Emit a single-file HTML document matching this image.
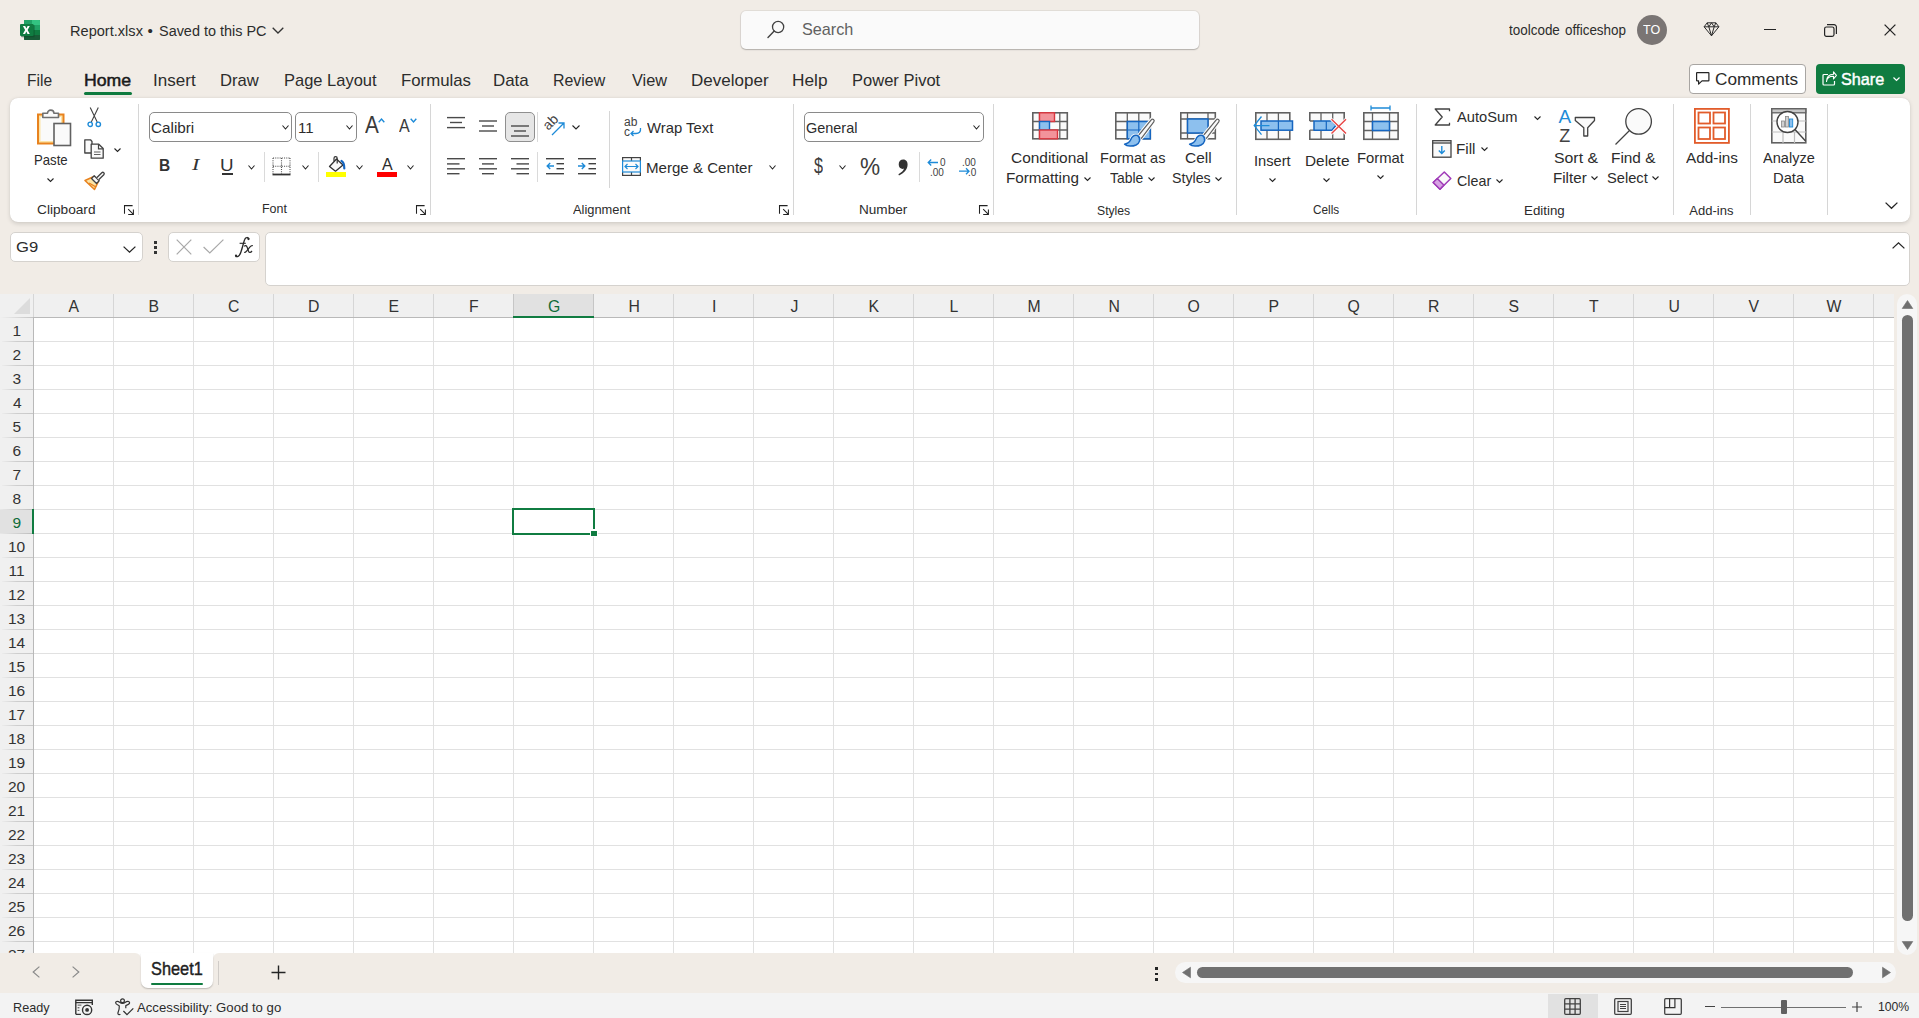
<!DOCTYPE html>
<html><head><meta charset="utf-8"><style>
html,body{margin:0;padding:0;}
body{width:1919px;height:1018px;overflow:hidden;position:relative;background:#F1ECE6;font-family:"Liberation Sans",sans-serif;}
.t{position:absolute;white-space:pre;transform-origin:0 0;}
svg{overflow:visible}
</style></head><body>
<!-- domain: Computer-Use -->
<svg style="position:absolute;left:20px;top:20px" width="20" height="20" viewBox="0 0 20 20">
<path d="M5 0H19A1 1 0 0 1 20 1V19A1 1 0 0 1 19 20H5A1 1 0 0 1 4 19V1A1 1 0 0 1 5 0Z" fill="#107C41"/>
<path d="M5 0H12V5H4V1A1 1 0 0 1 5 0Z" fill="#21A366"/>
<path d="M12 0H19A1 1 0 0 1 20 1V5H12Z" fill="#33C481"/>
<rect x="4" y="5" width="16" height="5" fill="#21A366"/>
<path d="M4 15H20V19A1 1 0 0 1 19 20H5A1 1 0 0 1 4 19Z" fill="#185C37"/>
<rect x="1" y="5" width="13.6" height="12.2" rx="1" fill="#0B4A26" opacity="0.55"/>
<rect x="0" y="4" width="13.6" height="12" rx="1" fill="#107C41"/>
<path d="M2.9 6H5.2L6.4 8.5L7.6 6H9.8L7.6 10L9.8 14H7.5L6.3 11.5L5.1 14H2.9L5.1 10Z" fill="#fff"/>
</svg><div class="t" style="left:69.55px;top:23.49px;font-size:15.3px;line-height:15.3px;font-weight:400;color:#2c2c2c;font-family:'Liberation Sans';font-style:normal;transform:scaleX(0.9533);">Report.xlsx</div><div class="t" style="left:147.60px;top:23.49px;font-size:15.3px;line-height:15.3px;font-weight:400;color:#2c2c2c;font-family:'Liberation Sans';font-style:normal;">•</div><div class="t" style="left:159.36px;top:23.49px;font-size:15.3px;line-height:15.3px;font-weight:400;color:#2c2c2c;font-family:'Liberation Sans';font-style:normal;transform:scaleX(0.9437);">Saved to this PC</div><svg style="position:absolute;left:272px;top:27px" width="12" height="7" viewBox="0 0 12 7"><path d="M0.7 0.7L6 6L11.3 0.7" fill="none" stroke="#333" stroke-width="1.3"/></svg><div style="position:absolute;left:741px;top:11px;width:458px;height:38px;background:#FAFAFA;border-radius:5px;box-shadow:0 0 0 1px rgba(0,0,0,0.06),0 1px 1.5px rgba(0,0,0,0.22);"></div><svg style="position:absolute;left:767px;top:21px" width="18" height="18" viewBox="0 0 18 18"><circle cx="11.1" cy="6" r="5.6" fill="none" stroke="#424242" stroke-width="1.3"/><path d="M7.2 10.1L1 16.6" stroke="#424242" stroke-width="1.4" stroke-linecap="round"/></svg><div class="t" style="left:801.75px;top:20.55px;font-size:17px;line-height:17px;font-weight:400;color:#616161;font-family:'Liberation Sans';font-style:normal;transform:scaleX(0.9538);">Search</div><div class="t" style="left:1509.10px;top:23.00px;font-size:14px;line-height:14px;font-weight:400;color:#2c2c2c;font-family:'Liberation Sans';font-style:normal;transform:scaleX(0.9604);">toolcode</div><div class="t" style="left:1564.74px;top:23.00px;font-size:14px;line-height:14px;font-weight:400;color:#2c2c2c;font-family:'Liberation Sans';font-style:normal;transform:scaleX(0.9597);">officeshop</div><div style="position:absolute;left:1637px;top:15px;width:30px;height:30px;background:#7A7574;border-radius:50%;"></div><div class="t" style="left:1643.00px;top:23.93px;font-size:12.9px;line-height:12.9px;font-weight:400;color:#ffffff;font-family:'Liberation Sans';font-style:normal;transform:scaleX(0.9706);">TO</div><svg style="position:absolute;left:1703px;top:22px" width="17" height="15" viewBox="0 0 17 15"><path d="M4.2 0.8H12.8L15.9 4.8L8.5 13.8L1.1 4.8Z M1.1 4.8H15.9 M5.8 4.8L8.5 13.8L11.2 4.8 M4.2 0.8L5.8 4.8L8.5 0.8L11.2 4.8L12.8 0.8" fill="none" stroke="#2a2a2a" stroke-width="1" stroke-linejoin="round"/></svg><div style="position:absolute;left:1764px;top:29px;width:12px;height:1.2px;background:#242424;"></div><svg style="position:absolute;left:1823.5px;top:23.5px" width="13" height="13" viewBox="0 0 13 13"><rect x="0.6" y="3" width="9.4" height="9.4" rx="1.8" fill="none" stroke="#242424" stroke-width="1.2"/><path d="M3 0.6H10A2.4 2.4 0 0 1 12.4 3V10" fill="none" stroke="#242424" stroke-width="1.2"/></svg><svg style="position:absolute;left:1884px;top:24px" width="12" height="12" viewBox="0 0 12 12"><path d="M0.6 0.6L11.4 11.4M11.4 0.6L0.6 11.4" stroke="#242424" stroke-width="1.3"/></svg><div class="t" style="left:26.58px;top:71.55px;font-size:17px;line-height:17px;font-weight:400;color:#2c2c2c;font-family:'Liberation Sans';font-style:normal;transform:scaleX(0.9154);">File</div><div class="t" style="left:153.20px;top:71.55px;font-size:17px;line-height:17px;font-weight:400;color:#2c2c2c;font-family:'Liberation Sans';font-style:normal;transform:scaleX(1.0024);">Insert</div><div class="t" style="left:219.72px;top:71.55px;font-size:17px;line-height:17px;font-weight:400;color:#2c2c2c;font-family:'Liberation Sans';font-style:normal;transform:scaleX(0.9769);">Draw</div><div class="t" style="left:283.53px;top:71.55px;font-size:17px;line-height:17px;font-weight:400;color:#2c2c2c;font-family:'Liberation Sans';font-style:normal;transform:scaleX(0.9695);">Page Layout</div><div class="t" style="left:400.61px;top:71.55px;font-size:17px;line-height:17px;font-weight:400;color:#2c2c2c;font-family:'Liberation Sans';font-style:normal;transform:scaleX(0.9884);">Formulas</div><div class="t" style="left:493.41px;top:71.55px;font-size:17px;line-height:17px;font-weight:400;color:#2c2c2c;font-family:'Liberation Sans';font-style:normal;transform:scaleX(0.9943);">Data</div><div class="t" style="left:553.26px;top:71.55px;font-size:17px;line-height:17px;font-weight:400;color:#2c2c2c;font-family:'Liberation Sans';font-style:normal;transform:scaleX(0.9364);">Review</div><div class="t" style="left:631.50px;top:71.55px;font-size:17px;line-height:17px;font-weight:400;color:#2c2c2c;font-family:'Liberation Sans';font-style:normal;transform:scaleX(0.9595);">View</div><div class="t" style="left:690.50px;top:71.55px;font-size:17px;line-height:17px;font-weight:400;color:#2c2c2c;font-family:'Liberation Sans';font-style:normal;transform:scaleX(1.0013);">Developer</div><div class="t" style="left:791.78px;top:71.55px;font-size:17px;line-height:17px;font-weight:400;color:#2c2c2c;font-family:'Liberation Sans';font-style:normal;transform:scaleX(1.0152);">Help</div><div class="t" style="left:851.53px;top:71.55px;font-size:17px;line-height:17px;font-weight:400;color:#2c2c2c;font-family:'Liberation Sans';font-style:normal;transform:scaleX(0.9722);">Power Pivot</div><div class="t" style="left:83.56px;top:71.55px;font-size:17px;line-height:17px;font-weight:400;color:#1a1a1a;font-family:'Liberation Sans';font-style:normal;transform:scaleX(1.0409);-webkit-text-stroke:0.5px #1a1a1a;">Home</div><div style="position:absolute;left:84px;top:92px;width:48px;height:3px;background:#0F7B3F;border-radius:1.5px;"></div><div style="position:absolute;left:1689px;top:64px;width:117px;height:30px;background:#fff;border:1px solid #A8A5A2;border-radius:4px;box-sizing:border-box;"></div><svg style="position:absolute;left:1696px;top:72px" width="14" height="13" viewBox="0 0 14 13"><path d="M1.1 0.6H12.4A0.5 0.5 0 0 1 12.9 1.1V8.4A0.5 0.5 0 0 1 12.4 8.9H6L2.6 12.1V8.9H1.1A0.5 0.5 0 0 1 0.6 8.4V1.1A0.5 0.5 0 0 1 1.1 0.6Z" fill="none" stroke="#242424" stroke-width="1.2" stroke-linejoin="round"/></svg><div class="t" style="left:1714.99px;top:70.55px;font-size:17px;line-height:17px;font-weight:400;color:#2c2c2c;font-family:'Liberation Sans';font-style:normal;transform:scaleX(1.0123);">Comments</div><div style="position:absolute;left:1816px;top:64px;width:89px;height:30px;background:#107C41;border-radius:4px;"></div><svg style="position:absolute;left:1822px;top:71px" width="15" height="15" viewBox="0 0 15 15"><path d="M6 3.5H2A1 1 0 0 0 1 4.5V13A1 1 0 0 0 2 14H11.5A1 1 0 0 0 12.5 13V10" fill="none" stroke="#fff" stroke-width="1.2"/><path d="M4.5 10.5C4.8 7 7.5 5.2 11.5 5.2V8L14.4 4.3L11.5 0.8V3.3C6.8 3.5 4.6 6.5 4.5 10.5Z" fill="none" stroke="#fff" stroke-width="1.1" stroke-linejoin="round"/></svg><div class="t" style="left:1841.05px;top:70.55px;font-size:17px;line-height:17px;font-weight:400;color:#ffffff;font-family:'Liberation Sans';font-style:normal;transform:scaleX(0.9545);-webkit-text-stroke:0.45px #fff;">Share</div><svg style="position:absolute;left:1893px;top:77px" width="7" height="4" viewBox="0 0 7 4"><path d="M0.5 0.5L3.5 3.5L6.5 0.5" fill="none" stroke="#fff" stroke-width="1.2"/></svg><div style="position:absolute;left:10px;top:98px;width:1900px;height:124px;background:#fff;border-radius:8px;box-shadow:0 1.5px 4px rgba(0,0,0,0.13),0 0 1px rgba(0,0,0,0.12);"></div><div style="position:absolute;left:138px;top:104px;width:1px;height:111px;background:#D6D6D6;"></div><div style="position:absolute;left:430px;top:104px;width:1px;height:111px;background:#D6D6D6;"></div><div style="position:absolute;left:793px;top:104px;width:1px;height:111px;background:#D6D6D6;"></div><div style="position:absolute;left:993px;top:104px;width:1px;height:111px;background:#D6D6D6;"></div><div style="position:absolute;left:1236px;top:104px;width:1px;height:111px;background:#D6D6D6;"></div><div style="position:absolute;left:1416px;top:104px;width:1px;height:111px;background:#D6D6D6;"></div><div style="position:absolute;left:1673px;top:104px;width:1px;height:111px;background:#D6D6D6;"></div><div style="position:absolute;left:1750px;top:104px;width:1px;height:111px;background:#D6D6D6;"></div><div style="position:absolute;left:1827px;top:104px;width:1px;height:111px;background:#D6D6D6;"></div><svg style="position:absolute;left:36px;top:107px" width="36" height="40" viewBox="0 0 36 40">
<rect x="2" y="7.5" width="25.5" height="29" fill="#FCE4A6" stroke="#E8821E" stroke-width="2"/>
<rect x="4.5" y="10" width="20.5" height="24" fill="#FAFAFA"/>
<path d="M6.8 10.5V6.3H11.5A3.2 3.2 0 0 1 17.9 6.3H22.5V10.5Z" fill="#FAFAFA" stroke="#707070" stroke-width="1.6" stroke-linejoin="round"/>
<rect x="18" y="16.5" width="16.5" height="22" fill="#FAFAFA" stroke="#616161" stroke-width="1.6"/>
</svg><div class="t" style="left:33.79px;top:153.28px;font-size:14.5px;line-height:14.5px;font-weight:400;color:#2c2c2c;font-family:'Liberation Sans';font-style:normal;transform:scaleX(0.9083);">Paste</div><svg style="position:absolute;left:47px;top:178px" width="7" height="4" viewBox="0 0 7 4"><path d="M0.5 0.5L3.5 3.5L6.5 0.5" fill="none" stroke="#242424" stroke-width="1.1"/></svg><svg style="position:absolute;left:87px;top:107px" width="15" height="21" viewBox="0 0 15 21"><path d="M3.2 0.5L10.2 15 M11.3 0.5L4.3 15" stroke="#424242" stroke-width="1.1"/><circle cx="3.2" cy="17.3" r="2.2" fill="#fff" stroke="#1E8BD8" stroke-width="1.4"/><circle cx="11.3" cy="17.3" r="2.2" fill="#fff" stroke="#1E8BD8" stroke-width="1.4"/></svg><svg style="position:absolute;left:84px;top:139px" width="20" height="20" viewBox="0 0 20 20">
<path d="M7 14H0.8V0.8H6.5L8 2.5V6" fill="#FAFAFA" stroke="#424242" stroke-width="1.3" stroke-linejoin="round"/>
<path d="M7.2 5.2H14.8L19.2 9.5V19.2H7.2Z" fill="#FAFAFA" stroke="#424242" stroke-width="1.3" stroke-linejoin="round"/>
<path d="M14.5 5.2V9.8H19" fill="none" stroke="#424242" stroke-width="1.2"/>
<path d="M10 13H16.5 M10 15.5H16.5" stroke="#616161" stroke-width="1.1"/>
</svg><svg style="position:absolute;left:114px;top:148px" width="7" height="4" viewBox="0 0 7 4"><path d="M0.5 0.5L3.5 3.5L6.5 0.5" fill="none" stroke="#242424" stroke-width="1.1"/></svg><svg style="position:absolute;left:84px;top:171px" width="21" height="19" viewBox="0 0 21 19">
<path d="M1 9.5L8.8 6L14 11.2L10.5 18.5Z" fill="#FCE4A6" stroke="#E8821E" stroke-width="1.6" stroke-linejoin="round"/>
<path d="M5 12L12 16" stroke="#E8821E" stroke-width="1.4"/>
<path d="M7.5 7.5L12.5 12.5L15.2 9.8L10.2 4.8Z" fill="#FAFAFA" stroke="#424242" stroke-width="1.3" stroke-linejoin="round"/>
<path d="M12.7 6.8L17.8 1.7A1.4 1.4 0 0 1 19.8 3.7L14.7 8.8" fill="#FAFAFA" stroke="#424242" stroke-width="1.3"/>
</svg><div class="t" style="left:36.65px;top:202.65px;font-size:13px;line-height:13px;font-weight:400;color:#2c2c2c;font-family:'Liberation Sans';font-style:normal;transform:scaleX(1.0519);">Clipboard</div><svg style="position:absolute;left:124px;top:205px" width="11" height="11" viewBox="0 0 11 11"><path d="M0.5 8.8V0.6H8.6 M4.2 4.2L9.4 9.4 M9.4 4.4V9.5H4.2" fill="none" stroke="#222" stroke-width="1.05"/></svg><div style="position:absolute;left:149px;top:112px;width:143px;height:30px;border:1px solid #8A8A8A;border-radius:5px;box-sizing:border-box;background:#fff;"></div><div class="t" style="left:151.28px;top:120.25px;font-size:15px;line-height:15px;font-weight:400;color:#2c2c2c;font-family:'Liberation Sans';font-style:normal;transform:scaleX(1.0171);">Calibri</div><svg style="position:absolute;left:282px;top:125px" width="7" height="4.5" viewBox="0 0 7 4.5"><path d="M0.5 0.5L3.5 4.0L6.5 0.5" fill="none" stroke="#242424" stroke-width="1.1"/></svg><div style="position:absolute;left:295px;top:112px;width:62px;height:30px;border:1px solid #8A8A8A;border-radius:5px;box-sizing:border-box;background:#fff;"></div><div class="t" style="left:298.00px;top:120.25px;font-size:15px;line-height:15px;font-weight:400;color:#2c2c2c;font-family:'Liberation Sans';font-style:normal;">11</div><svg style="position:absolute;left:346px;top:125px" width="7" height="4.5" viewBox="0 0 7 4.5"><path d="M0.5 0.5L3.5 4.0L6.5 0.5" fill="none" stroke="#242424" stroke-width="1.1"/></svg><div class="t" style="left:365.40px;top:113.65px;font-size:23px;line-height:23px;font-weight:400;color:#3a3a3a;font-family:'Liberation Sans';font-style:normal;transform:scaleX(0.9000);">A</div><svg style="position:absolute;left:378px;top:118px" width="7" height="5" viewBox="0 0 7 5"><path d="M0.7 4.2L3.5 1L6.3 4.2" fill="none" stroke="#1E8BD8" stroke-width="1.4"/></svg><div class="t" style="left:399.00px;top:118.32px;font-size:17.5px;line-height:17.5px;font-weight:400;color:#3a3a3a;font-family:'Liberation Sans';font-style:normal;transform:scaleX(0.9167);">A</div><svg style="position:absolute;left:410px;top:118px" width="7" height="5" viewBox="0 0 7 5"><path d="M0.7 0.8L3.5 4L6.3 0.8" fill="none" stroke="#1E8BD8" stroke-width="1.4"/></svg><div class="t" style="left:158.66px;top:157.38px;font-size:16.5px;line-height:16.5px;font-weight:700;color:#333;font-family:'Liberation Sans';font-style:normal;transform:scaleX(0.9400);">B</div><div class="t" style="left:192.00px;top:157.38px;font-size:16.5px;line-height:16.5px;font-weight:400;color:#333;font-family:'Liberation Serif';font-style:italic;transform:scaleX(1.3333);">I</div><div class="t" style="left:220.46px;top:157.38px;font-size:16.5px;line-height:16.5px;font-weight:400;color:#333;font-family:'Liberation Sans';font-style:normal;transform:scaleX(1.1400);">U</div><div style="position:absolute;left:222px;top:173px;width:11px;height:1.6px;background:#333;"></div><svg style="position:absolute;left:248px;top:165px" width="7" height="4.5" viewBox="0 0 7 4.5"><path d="M0.5 0.5L3.5 4.0L6.5 0.5" fill="none" stroke="#242424" stroke-width="1.1"/></svg><div style="position:absolute;left:264px;top:152px;width:1px;height:30px;background:#DADADA;"></div><svg style="position:absolute;left:272px;top:157px" width="19" height="19" viewBox="0 0 19 19"><path d="M1 1H18 M1 9.2H18 M1 1V17 M9.5 1V17 M18 1V17" fill="none" stroke="#555" stroke-width="1.1" stroke-dasharray="1.1 1.1"/><path d="M0.5 17.5H18.5" stroke="#333" stroke-width="1.8"/></svg><svg style="position:absolute;left:302px;top:165px" width="7" height="4.5" viewBox="0 0 7 4.5"><path d="M0.5 0.5L3.5 4.0L6.5 0.5" fill="none" stroke="#242424" stroke-width="1.1"/></svg><div style="position:absolute;left:318px;top:152px;width:1px;height:30px;background:#DADADA;"></div><svg style="position:absolute;left:326px;top:156px" width="21" height="22" viewBox="0 0 21 22">
<path d="M3.5 10.5L10.5 3L17 9L9.5 15.2Z" fill="#FAFAFA" stroke="#333" stroke-width="1.3" stroke-linejoin="round"/>
<path d="M8 5.5V2.2A1.6 1.6 0 0 1 11.2 2.2V7.5" fill="none" stroke="#333" stroke-width="1.2"/>
<path d="M15.5 5C17.5 6 18.3 8.5 18.3 12.5" fill="none" stroke="#1565C0" stroke-width="2.2" stroke-linecap="round"/>
<rect x="0" y="16" width="20" height="5" fill="#FFFF00"/>
</svg><svg style="position:absolute;left:356px;top:165px" width="7" height="4.5" viewBox="0 0 7 4.5"><path d="M0.5 0.5L3.5 4.0L6.5 0.5" fill="none" stroke="#242424" stroke-width="1.1"/></svg><div class="t" style="left:382.00px;top:157.00px;font-size:16px;line-height:16px;font-weight:400;color:#2c2c2c;font-family:'Liberation Sans';font-style:normal;transform:scaleX(1.0000);">A</div><div style="position:absolute;left:377px;top:172px;width:20px;height:5px;background:#FF0000;"></div><svg style="position:absolute;left:407px;top:165px" width="7" height="4.5" viewBox="0 0 7 4.5"><path d="M0.5 0.5L3.5 4.0L6.5 0.5" fill="none" stroke="#242424" stroke-width="1.1"/></svg><div class="t" style="left:261.74px;top:202.45px;font-size:13px;line-height:13px;font-weight:400;color:#2c2c2c;font-family:'Liberation Sans';font-style:normal;transform:scaleX(0.9600);">Font</div><svg style="position:absolute;left:416px;top:205px" width="11" height="11" viewBox="0 0 11 11"><path d="M0.5 8.8V0.6H8.6 M4.2 4.2L9.4 9.4 M9.4 4.4V9.5H4.2" fill="none" stroke="#222" stroke-width="1.05"/></svg><svg style="position:absolute;left:447px;top:100px" width="30" height="90" viewBox="0 0 30 90"><rect x="0" y="16.900000000000002" width="18" height="1.4" fill="#4a4a4a"/><rect x="3" y="21.8" width="12" height="1.4" fill="#4a4a4a"/><rect x="0" y="26.900000000000002" width="18" height="1.4" fill="#4a4a4a"/></svg><svg style="position:absolute;left:479px;top:100px" width="30" height="90" viewBox="0 0 30 90"><rect x="0" y="20.3" width="18" height="1.4" fill="#4a4a4a"/><rect x="3" y="25.3" width="12" height="1.4" fill="#4a4a4a"/><rect x="0" y="30.3" width="18" height="1.4" fill="#4a4a4a"/></svg><div style="position:absolute;left:505px;top:112px;width:30px;height:30px;background:#E6E6E6;border:1px solid #8F8F8F;border-radius:5px;box-sizing:border-box;"></div><svg style="position:absolute;left:511px;top:100px" width="30" height="90" viewBox="0 0 30 90"><rect x="0" y="25.3" width="18" height="1.4" fill="#4a4a4a"/><rect x="3" y="30.3" width="12" height="1.4" fill="#4a4a4a"/><rect x="0" y="35.3" width="18" height="1.4" fill="#4a4a4a"/></svg><div style="position:absolute;left:537px;top:112px;width:1px;height:30px;background:#DADADA;"></div><svg style="position:absolute;left:544px;top:116px" width="22" height="20" viewBox="0 0 22 20">
<text x="0" y="0" transform="translate(4.2 15) rotate(-45)" font-family="Liberation Sans" font-size="14" fill="#424242">ab</text>
<path d="M8 19L20 7 M14.5 7H20V12.5" fill="none" stroke="#1E8BD8" stroke-width="1.3"/>
</svg><svg style="position:absolute;left:572px;top:125px" width="8" height="4.5" viewBox="0 0 8 4.5"><path d="M0.5 0.5L4.0 4.0L7.5 0.5" fill="none" stroke="#242424" stroke-width="1.1"/></svg><svg style="position:absolute;left:447px;top:100px" width="30" height="90" viewBox="0 0 30 90"><rect x="0" y="58.0" width="18" height="1.4" fill="#4a4a4a"/><rect x="0" y="63.199999999999996" width="12.5" height="1.4" fill="#4a4a4a"/><rect x="0" y="68.1" width="18" height="1.4" fill="#4a4a4a"/><rect x="0" y="73.0" width="12.5" height="1.4" fill="#4a4a4a"/></svg><svg style="position:absolute;left:479px;top:100px" width="30" height="90" viewBox="0 0 30 90"><rect x="0" y="58.0" width="18" height="1.4" fill="#4a4a4a"/><rect x="3" y="63.199999999999996" width="12" height="1.4" fill="#4a4a4a"/><rect x="0" y="68.1" width="18" height="1.4" fill="#4a4a4a"/><rect x="3" y="73.0" width="12" height="1.4" fill="#4a4a4a"/></svg><svg style="position:absolute;left:511px;top:100px" width="30" height="90" viewBox="0 0 30 90"><rect x="0" y="58.0" width="18" height="1.4" fill="#4a4a4a"/><rect x="5.5" y="63.199999999999996" width="12.5" height="1.4" fill="#4a4a4a"/><rect x="0" y="68.1" width="18" height="1.4" fill="#4a4a4a"/><rect x="5.5" y="73.0" width="12.5" height="1.4" fill="#4a4a4a"/></svg><div style="position:absolute;left:537px;top:152px;width:1px;height:30px;background:#DADADA;"></div><svg style="position:absolute;left:546px;top:157px" width="18" height="18" viewBox="0 0 18 18"><rect x="0" y="1" width="18" height="1.4" fill="#424242"/><rect x="10.5" y="6" width="7.5" height="1.4" fill="#424242"/><rect x="10.5" y="11" width="7.5" height="1.4" fill="#424242"/><rect x="0" y="16" width="18" height="1.4" fill="#424242"/><path d="M8 9H1.2 M4.2 6L1.2 9L4.2 12" fill="none" stroke="#1E8BD8" stroke-width="1.4"/></svg><svg style="position:absolute;left:578px;top:157px" width="18" height="18" viewBox="0 0 18 18"><rect x="0" y="1" width="18" height="1.4" fill="#424242"/><rect x="10.5" y="6" width="7.5" height="1.4" fill="#424242"/><rect x="10.5" y="11" width="7.5" height="1.4" fill="#424242"/><rect x="0" y="16" width="18" height="1.4" fill="#424242"/><path d="M0 9H6.8 M3.8 6L6.8 9L3.8 12" fill="none" stroke="#1E8BD8" stroke-width="1.4"/></svg><div style="position:absolute;left:609px;top:111px;width:1px;height:77px;background:#D6D6D6;"></div><svg style="position:absolute;left:624px;top:117px" width="18" height="20" viewBox="0 0 18 20">
<text x="0" y="9" font-family="Liberation Sans" font-size="12" fill="#424242">ab</text>
<text x="0" y="19" font-family="Liberation Sans" font-size="12" fill="#424242">c</text>
<path d="M16.5 11C17 15 15 16.5 12 16.5H7 M9.5 14L7 16.5L9.5 19" fill="none" stroke="#1E8BD8" stroke-width="1.3"/>
</svg><div class="t" style="left:647.40px;top:120.25px;font-size:15px;line-height:15px;font-weight:400;color:#2c2c2c;font-family:'Liberation Sans';font-style:normal;transform:scaleX(0.9896);">Wrap Text</div><svg style="position:absolute;left:622px;top:157px" width="19" height="19" viewBox="0 0 19 19">
<rect x="0.6" y="0.6" width="17.8" height="17.8" fill="#FAFAFA" stroke="#424242" stroke-width="1.2"/>
<path d="M9.5 0.6V4 M9.5 15V18.4" stroke="#424242" stroke-width="1.2"/>
<rect x="0.6" y="4" width="17.8" height="11" fill="#FAFAFA" stroke="#1E8BD8" stroke-width="1.2"/>
<path d="M3 9.5H16 M5.5 7L3 9.5L5.5 12 M13.5 7L16 9.5L13.5 12" fill="none" stroke="#1E8BD8" stroke-width="1.2"/>
</svg><div class="t" style="left:646.39px;top:159.95px;font-size:15px;line-height:15px;font-weight:400;color:#2c2c2c;font-family:'Liberation Sans';font-style:normal;transform:scaleX(1.0057);">Merge & Center</div><svg style="position:absolute;left:769px;top:165px" width="7" height="4.5" viewBox="0 0 7 4.5"><path d="M0.5 0.5L3.5 4.0L6.5 0.5" fill="none" stroke="#242424" stroke-width="1.1"/></svg><div class="t" style="left:573.40px;top:202.95px;font-size:13px;line-height:13px;font-weight:400;color:#2c2c2c;font-family:'Liberation Sans';font-style:normal;transform:scaleX(0.9897);">Alignment</div><svg style="position:absolute;left:779px;top:205px" width="11" height="11" viewBox="0 0 11 11"><path d="M0.5 8.8V0.6H8.6 M4.2 4.2L9.4 9.4 M9.4 4.4V9.5H4.2" fill="none" stroke="#222" stroke-width="1.05"/></svg><div style="position:absolute;left:804px;top:112px;width:180px;height:30px;border:1px solid #8A8A8A;border-radius:5px;box-sizing:border-box;background:#fff;"></div><div class="t" style="left:806.34px;top:120.25px;font-size:15px;line-height:15px;font-weight:400;color:#2c2c2c;font-family:'Liberation Sans';font-style:normal;transform:scaleX(0.9635);">General</div><svg style="position:absolute;left:973px;top:125px" width="7" height="4.5" viewBox="0 0 7 4.5"><path d="M0.5 0.5L3.5 4.0L6.5 0.5" fill="none" stroke="#242424" stroke-width="1.1"/></svg><div class="t" style="left:814.00px;top:156.22px;font-size:21.5px;line-height:21.5px;font-weight:400;color:#3c3c3c;font-family:'Liberation Sans';font-style:normal;transform:scaleX(0.7500);">$</div><svg style="position:absolute;left:839px;top:165px" width="7" height="4.5" viewBox="0 0 7 4.5"><path d="M0.5 0.5L3.5 4.0L6.5 0.5" fill="none" stroke="#242424" stroke-width="1.1"/></svg><div class="t" style="left:859.74px;top:155.53px;font-size:23.5px;line-height:23.5px;font-weight:400;color:#3c3c3c;font-family:'Liberation Sans';font-style:normal;transform:scaleX(0.9632);">%</div><svg style="position:absolute;left:898px;top:159px" width="10" height="17" viewBox="0 0 10 17"><path d="M5.2 0.6C8.3 0.6 9.6 3 9.6 5.6C9.6 10.5 6 14.5 1 16.4L0.4 15.3C3.6 13.6 5.6 11.4 6 9.6C5.7 9.8 5.2 9.9 4.8 9.9C2.3 9.9 0.7 8.1 0.7 5.2C0.7 2.4 2.6 0.6 5.2 0.6Z" fill="#333"/></svg><div style="position:absolute;left:919px;top:152px;width:1px;height:30px;background:#DADADA;"></div><svg style="position:absolute;left:927px;top:157px" width="20" height="19" viewBox="0 0 20 19">
<text x="13" y="8.5" font-family="Liberation Sans" font-size="10" fill="#424242">0</text>
<text x="3" y="18.5" font-family="Liberation Sans" font-size="10" fill="#424242">.00</text>
<path d="M11 5.5H1.2 M4.2 2.5L1.2 5.5L4.2 8.5" fill="none" stroke="#1E8BD8" stroke-width="1.3"/>
</svg><svg style="position:absolute;left:959px;top:157px" width="20" height="19" viewBox="0 0 20 19">
<text x="3" y="8.5" font-family="Liberation Sans" font-size="10" fill="#424242">.00</text>
<text x="9" y="18.5" font-family="Liberation Sans" font-size="10" fill="#424242">.0</text>
<path d="M0 14.2H10 M7 11.2L10 14.2L7 17.2" fill="none" stroke="#1E8BD8" stroke-width="1.3"/>
</svg><div class="t" style="left:858.66px;top:202.95px;font-size:13px;line-height:13px;font-weight:400;color:#2c2c2c;font-family:'Liberation Sans';font-style:normal;transform:scaleX(1.0444);">Number</div><svg style="position:absolute;left:979px;top:205px" width="11" height="11" viewBox="0 0 11 11"><path d="M0.5 8.8V0.6H8.6 M4.2 4.2L9.4 9.4 M9.4 4.4V9.5H4.2" fill="none" stroke="#222" stroke-width="1.05"/></svg><svg style="position:absolute;left:1032px;top:112px" width="37" height="28" viewBox="0 0 37 28">
<rect x="0.8" y="0.8" width="34.5" height="26" fill="#FAFAFA" stroke="#616161" stroke-width="1.6"/>
<path d="M7.5 0.8V26.8 M27.8 0.8V26.8 M0.8 9.5H35.3 M0.8 18H35.3" stroke="#616161" stroke-width="1.3"/>
<rect x="7.5" y="0.8" width="15" height="8.7" fill="#F2939A" stroke="#D9363E" stroke-width="1.4"/>
<rect x="7.5" y="9.5" width="10" height="8.5" fill="#8DC0EE" stroke="#1565C0" stroke-width="1.4"/>
<rect x="7.5" y="18" width="18" height="8.8" fill="#F2939A" stroke="#D9363E" stroke-width="1.4"/>
</svg><div class="t" style="left:1010.54px;top:151.28px;font-size:14.5px;line-height:14.5px;font-weight:400;color:#2c2c2c;font-family:'Liberation Sans';font-style:normal;transform:scaleX(1.0648);">Conditional</div><div class="t" style="left:1005.65px;top:171.28px;font-size:14.5px;line-height:14.5px;font-weight:400;color:#2c2c2c;font-family:'Liberation Sans';font-style:normal;transform:scaleX(1.0515);">Formatting</div><svg style="position:absolute;left:1084px;top:177px" width="7" height="4" viewBox="0 0 7 4"><path d="M0.5 0.5L3.5 3.5L6.5 0.5" fill="none" stroke="#242424" stroke-width="1.1"/></svg><svg style="position:absolute;left:1115px;top:112px" width="39" height="35" viewBox="0 0 39 35">
<rect x="0.8" y="0.8" width="34.5" height="26" fill="#FAFAFA" stroke="#616161" stroke-width="1.6"/>
<path d="M12.3 0.8V26.8 M23.8 0.8V26.8 M0.8 9.5H35.3 M0.8 18H35.3" stroke="#616161" stroke-width="1.3"/>
<rect x="12.3" y="9.5" width="23" height="17.3" fill="#8DC0EE" stroke="#1565C0" stroke-width="1.5"/>
<path d="M23.8 9.5V26.8 M12.3 18H35.3" stroke="#1565C0" stroke-width="1.2"/>
<path d="M36.2 7.8A1.6 1.6 0 0 1 38.8 9.8L26.4 26.4L23 24Z" fill="#fff" stroke="#fff" stroke-width="3.2" stroke-linejoin="round"/><path d="M36.2 7.8A1.6 1.6 0 0 1 38.8 9.8L26.4 26.4L23 24Z" fill="#FAFAFA" stroke="#616161" stroke-width="1.2" stroke-linejoin="round"/>
<path d="M22.8 23.6C19 22.6 16.8 25 15.8 27.6C15 29.6 12.8 31.6 9.6 32.2C12.2 34.6 17.5 34.6 21 33C24.6 31.2 26.4 26.8 22.8 23.6Z" fill="#fff" stroke="#fff" stroke-width="3" stroke-linejoin="round"/><path d="M22.8 23.6C19 22.6 16.8 25 15.8 27.6C15 29.6 12.8 31.6 9.6 32.2C12.2 34.6 17.5 34.6 21 33C24.6 31.2 26.4 26.8 22.8 23.6Z" fill="#8DC0EE" stroke="#1565C0" stroke-width="1.5" stroke-linejoin="round"/>
</svg><div class="t" style="left:1099.60px;top:151.28px;font-size:14.5px;line-height:14.5px;font-weight:400;color:#2c2c2c;font-family:'Liberation Sans';font-style:normal;transform:scaleX(1.0031);">Format as</div><div class="t" style="left:1109.90px;top:171.28px;font-size:14.5px;line-height:14.5px;font-weight:400;color:#2c2c2c;font-family:'Liberation Sans';font-style:normal;transform:scaleX(0.9588);">Table</div><svg style="position:absolute;left:1148px;top:177px" width="7" height="4" viewBox="0 0 7 4"><path d="M0.5 0.5L3.5 3.5L6.5 0.5" fill="none" stroke="#242424" stroke-width="1.1"/></svg><svg style="position:absolute;left:1180px;top:112px" width="39" height="35" viewBox="0 0 39 35">
<rect x="0.8" y="0.8" width="34.5" height="26" fill="#FAFAFA" stroke="#616161" stroke-width="1.6"/>
<path d="M7.5 0.8V26.8 M28 0.8V26.8 M0.8 7H35.3 M0.8 21H35.3" stroke="#616161" stroke-width="1.3"/>
<rect x="7.5" y="7" width="20.5" height="14" fill="#8DC0EE" stroke="#1565C0" stroke-width="1.5"/>
<path d="M36.2 7.8A1.6 1.6 0 0 1 38.8 9.8L26.4 26.4L23 24Z" fill="#fff" stroke="#fff" stroke-width="3.2" stroke-linejoin="round"/><path d="M36.2 7.8A1.6 1.6 0 0 1 38.8 9.8L26.4 26.4L23 24Z" fill="#FAFAFA" stroke="#616161" stroke-width="1.2" stroke-linejoin="round"/>
<path d="M22.8 23.6C19 22.6 16.8 25 15.8 27.6C15 29.6 12.8 31.6 9.6 32.2C12.2 34.6 17.5 34.6 21 33C24.6 31.2 26.4 26.8 22.8 23.6Z" fill="#fff" stroke="#fff" stroke-width="3" stroke-linejoin="round"/><path d="M22.8 23.6C19 22.6 16.8 25 15.8 27.6C15 29.6 12.8 31.6 9.6 32.2C12.2 34.6 17.5 34.6 21 33C24.6 31.2 26.4 26.8 22.8 23.6Z" fill="#8DC0EE" stroke="#1565C0" stroke-width="1.5" stroke-linejoin="round"/>
</svg><div class="t" style="left:1184.93px;top:151.28px;font-size:14.5px;line-height:14.5px;font-weight:400;color:#2c2c2c;font-family:'Liberation Sans';font-style:normal;transform:scaleX(1.0652);">Cell</div><div class="t" style="left:1171.52px;top:171.28px;font-size:14.5px;line-height:14.5px;font-weight:400;color:#2c2c2c;font-family:'Liberation Sans';font-style:normal;transform:scaleX(0.9789);">Styles</div><svg style="position:absolute;left:1215px;top:177px" width="7" height="4" viewBox="0 0 7 4"><path d="M0.5 0.5L3.5 3.5L6.5 0.5" fill="none" stroke="#242424" stroke-width="1.1"/></svg><div class="t" style="left:1097.46px;top:203.55px;font-size:13px;line-height:13px;font-weight:400;color:#2c2c2c;font-family:'Liberation Sans';font-style:normal;transform:scaleX(0.9382);">Styles</div><svg style="position:absolute;left:1253px;top:112px" width="41" height="28" viewBox="0 0 41 28">
<rect x="2.8" y="0.8" width="34" height="26.5" fill="#FAFAFA" stroke="#616161" stroke-width="1.6"/>
<path d="M14 0.8V27.3 M25.4 0.8V27.3" stroke="#616161" stroke-width="1.3"/>
<rect x="8" y="9" width="31.5" height="9.2" fill="#8DC0EE" stroke="#1565C0" stroke-width="1.5"/>
<path d="M25.4 9V18.2" stroke="#1565C0" stroke-width="1.2"/>
<path d="M16.5 13.6H2 M8.5 4.5L1.2 13.6L8.5 22.7" fill="none" stroke="#1E8BD8" stroke-width="1.3"/>
</svg><div class="t" style="left:1254.39px;top:153.68px;font-size:14.5px;line-height:14.5px;font-weight:400;color:#2c2c2c;font-family:'Liberation Sans';font-style:normal;transform:scaleX(1.0114);">Insert</div><svg style="position:absolute;left:1269px;top:178px" width="7" height="4" viewBox="0 0 7 4"><path d="M0.5 0.5L3.5 3.5L6.5 0.5" fill="none" stroke="#242424" stroke-width="1.1"/></svg><svg style="position:absolute;left:1309px;top:112px" width="39" height="28" viewBox="0 0 39 28">
<path d="M0.8 9V0.8H35.2V9 M0.8 18.2V27.3H35.2V18.2" fill="#FAFAFA" stroke="#616161" stroke-width="1.6"/>
<rect x="0.8" y="0.8" width="34.4" height="26.5" fill="#FAFAFA"/>
<path d="M0.8 9V0.8H35.2V9 M0.8 18.2V27.3H35.2V18.2" fill="none" stroke="#616161" stroke-width="1.6"/>
<path d="M12 0.8V9 M23.7 0.8V9 M12 18.2V27.3 M23.7 18.2V27.3 M0.8 9H5 M0.8 18.2H5" stroke="#616161" stroke-width="1.3"/>
<path d="M5 9H23L26.8 13.6L23 18.2H5Z" fill="#8DC0EE" stroke="#1565C0" stroke-width="1.5" stroke-linejoin="round"/>
<path d="M17.3 9V18.2" stroke="#1565C0" stroke-width="1.2"/>
<path d="M22.5 7.3L37 21.6 M37 7.3L22.5 21.6" stroke="#fff" stroke-width="3.2"/>
<path d="M22.5 7.3L37 21.6 M37 7.3L22.5 21.6" stroke="#E84545" stroke-width="1.4"/>
</svg><div class="t" style="left:1305.04px;top:153.68px;font-size:14.5px;line-height:14.5px;font-weight:400;color:#2c2c2c;font-family:'Liberation Sans';font-style:normal;transform:scaleX(1.0600);">Delete</div><svg style="position:absolute;left:1323px;top:178px" width="7" height="4" viewBox="0 0 7 4"><path d="M0.5 0.5L3.5 3.5L6.5 0.5" fill="none" stroke="#242424" stroke-width="1.1"/></svg><svg style="position:absolute;left:1363px;top:105px" width="37" height="35" viewBox="0 0 37 35">
<path d="M8 3H27 M8 0.5V5.5 M27 0.5V5.5" stroke="#1E8BD8" stroke-width="1.3"/>
<rect x="0.8" y="7.8" width="34.3" height="26.5" fill="#FAFAFA" stroke="#616161" stroke-width="1.6"/>
<path d="M9.5 7.8V34.3 M26.5 7.8V34.3 M0.8 16.5H35 M0.8 25.5H35" stroke="#616161" stroke-width="1.3"/>
<rect x="9.5" y="16.5" width="17" height="9" fill="#8DC0EE" stroke="#1565C0" stroke-width="1.5"/>
</svg><div class="t" style="left:1356.68px;top:151.48px;font-size:14.5px;line-height:14.5px;font-weight:400;color:#2c2c2c;font-family:'Liberation Sans';font-style:normal;transform:scaleX(1.0222);">Format</div><svg style="position:absolute;left:1377px;top:175px" width="7" height="4" viewBox="0 0 7 4"><path d="M0.5 0.5L3.5 3.5L6.5 0.5" fill="none" stroke="#242424" stroke-width="1.1"/></svg><div class="t" style="left:1312.99px;top:203.35px;font-size:13px;line-height:13px;font-weight:400;color:#2c2c2c;font-family:'Liberation Sans';font-style:normal;transform:scaleX(0.9071);">Cells</div><svg style="position:absolute;left:1434px;top:108px" width="16" height="18" viewBox="0 0 16 18"><path d="M15.5 3.2V1H1.2L8.2 9L1.2 17H15.5V14.8" fill="none" stroke="#424242" stroke-width="1.3" stroke-linejoin="round"/></svg><div class="t" style="left:1457.40px;top:110.47px;font-size:14.5px;line-height:14.5px;font-weight:400;color:#2c2c2c;font-family:'Liberation Sans';font-style:normal;transform:scaleX(1.0136);">AutoSum</div><svg style="position:absolute;left:1534px;top:116px" width="7" height="4" viewBox="0 0 7 4"><path d="M0.5 0.5L3.5 3.5L6.5 0.5" fill="none" stroke="#242424" stroke-width="1.1"/></svg><svg style="position:absolute;left:1432px;top:140px" width="20" height="18" viewBox="0 0 20 18"><rect x="0.7" y="0.7" width="18.3" height="16.5" fill="#FAFAFA" stroke="#424242" stroke-width="1.3"/><path d="M0.7 3H19" stroke="#424242" stroke-width="1.3"/><path d="M9.8 6V13.5 M6.8 10.5L9.8 13.5L12.8 10.5" fill="none" stroke="#1E8BD8" stroke-width="1.4"/></svg><div class="t" style="left:1456.45px;top:142.18px;font-size:14.5px;line-height:14.5px;font-weight:400;color:#2c2c2c;font-family:'Liberation Sans';font-style:normal;transform:scaleX(1.0471);">Fill</div><svg style="position:absolute;left:1481px;top:147px" width="7" height="4" viewBox="0 0 7 4"><path d="M0.5 0.5L3.5 3.5L6.5 0.5" fill="none" stroke="#242424" stroke-width="1.1"/></svg><svg style="position:absolute;left:1432px;top:171px" width="20" height="20" viewBox="0 0 20 20"><path d="M12.3 1L18.8 7.5L8 18.3L1.2 11.5Z" fill="#FAFAFA" stroke="#A03BB8" stroke-width="1.5" stroke-linejoin="round"/><path d="M5.3 7.5L11.8 14L8 18.3L1.2 11.5Z" fill="#D7A3E3" stroke="#A03BB8" stroke-width="1.5" stroke-linejoin="round"/></svg><div class="t" style="left:1456.51px;top:174.28px;font-size:14.5px;line-height:14.5px;font-weight:400;color:#2c2c2c;font-family:'Liberation Sans';font-style:normal;transform:scaleX(0.9853);">Clear</div><svg style="position:absolute;left:1496px;top:179px" width="7" height="4" viewBox="0 0 7 4"><path d="M0.5 0.5L3.5 3.5L6.5 0.5" fill="none" stroke="#242424" stroke-width="1.1"/></svg><svg style="position:absolute;left:1559px;top:109px" width="37" height="34" viewBox="0 0 37 34">
<text x="-0.5" y="15.5" font-family="Liberation Sans" font-size="19" fill="#1E8BD8" transform="scale(1 0.93)">A</text>
<text x="0.3" y="33" font-family="Liberation Sans" font-size="18" fill="#424242">Z</text>
<path d="M16.3 8.5H35.5V11.5L28.7 18.8V27H24.8V18.8L16.3 11.5Z" fill="#FAFAFA" stroke="#424242" stroke-width="1.3" stroke-linejoin="round"/>
</svg><div class="t" style="left:1554.31px;top:151.48px;font-size:14.5px;line-height:14.5px;font-weight:400;color:#2c2c2c;font-family:'Liberation Sans';font-style:normal;transform:scaleX(1.0923);">Sort &</div><div class="t" style="left:1552.75px;top:171.18px;font-size:14.5px;line-height:14.5px;font-weight:400;color:#2c2c2c;font-family:'Liberation Sans';font-style:normal;transform:scaleX(1.0452);">Filter</div><svg style="position:absolute;left:1591px;top:176px" width="7" height="4" viewBox="0 0 7 4"><path d="M0.5 0.5L3.5 3.5L6.5 0.5" fill="none" stroke="#242424" stroke-width="1.1"/></svg><svg style="position:absolute;left:1614px;top:107px" width="39" height="39" viewBox="0 0 39 39"><circle cx="24.6" cy="14.4" r="12.8" fill="#FAFAFA" stroke="#424242" stroke-width="1.3"/><path d="M15.5 23.5L1.5 37.5" stroke="#424242" stroke-width="1.3"/></svg><div class="t" style="left:1611.44px;top:151.48px;font-size:14.5px;line-height:14.5px;font-weight:400;color:#2c2c2c;font-family:'Liberation Sans';font-style:normal;transform:scaleX(1.0610);">Find &</div><div class="t" style="left:1606.59px;top:171.18px;font-size:14.5px;line-height:14.5px;font-weight:400;color:#2c2c2c;font-family:'Liberation Sans';font-style:normal;transform:scaleX(1.0103);">Select</div><svg style="position:absolute;left:1652px;top:176px" width="7" height="4" viewBox="0 0 7 4"><path d="M0.5 0.5L3.5 3.5L6.5 0.5" fill="none" stroke="#242424" stroke-width="1.1"/></svg><div class="t" style="left:1524.48px;top:203.85px;font-size:13px;line-height:13px;font-weight:400;color:#2c2c2c;font-family:'Liberation Sans';font-style:normal;transform:scaleX(1.0237);">Editing</div><svg style="position:absolute;left:1694px;top:108px" width="36" height="36" viewBox="0 0 36 36">
<rect x="0.9" y="0.9" width="34" height="34" fill="#fff" stroke="#E25C2B" stroke-width="1.8"/>
<rect x="4.5" y="4.5" width="11.5" height="11" fill="#fff" stroke="#E25C2B" stroke-width="1.8"/>
<rect x="19.5" y="4.5" width="11.5" height="11" fill="#fff" stroke="#E25C2B" stroke-width="1.8"/>
<rect x="4.5" y="19.5" width="11.5" height="11.5" fill="#fff" stroke="#E25C2B" stroke-width="1.8"/>
<rect x="19.5" y="19.5" width="11.5" height="11.5" fill="#fff" stroke="#E25C2B" stroke-width="1.8"/>
</svg><div class="t" style="left:1686.20px;top:151.38px;font-size:14.5px;line-height:14.5px;font-weight:400;color:#2c2c2c;font-family:'Liberation Sans';font-style:normal;transform:scaleX(1.0571);">Add-ins</div><div class="t" style="left:1689.30px;top:203.75px;font-size:13px;line-height:13px;font-weight:400;color:#2c2c2c;font-family:'Liberation Sans';font-style:normal;transform:scaleX(1.0000);">Add-ins</div><svg style="position:absolute;left:1771px;top:108px" width="37" height="37" viewBox="0 0 37 37">
<rect x="0.8" y="0.8" width="34" height="34" fill="#FAFAFA" stroke="#616161" stroke-width="1.6"/>
<rect x="0.8" y="0.8" width="34" height="4" fill="#C8C8C8" stroke="#616161" stroke-width="1.3"/>
<path d="M0.8 13H35 M0.8 24H35 M12 24V35 M23.5 24V35" stroke="#BDBDBD" stroke-width="1.2"/>
<circle cx="16.5" cy="14" r="10.5" fill="#fff" stroke="#424242" stroke-width="1.4"/>
<path d="M24 21.5L34.5 33" stroke="#424242" stroke-width="1.4"/>
<rect x="10.5" y="13" width="3" height="6" fill="#D0D0D0" stroke="#888" stroke-width="0.8"/>
<rect x="14.5" y="8.5" width="3" height="10.5" fill="#D0D0D0" stroke="#888" stroke-width="0.8"/>
<rect x="18.5" y="11" width="3.2" height="8" fill="#8DC0EE" stroke="#1E8BD8" stroke-width="0.9"/>
</svg><div class="t" style="left:1763.40px;top:151.38px;font-size:14.5px;line-height:14.5px;font-weight:400;color:#2c2c2c;font-family:'Liberation Sans';font-style:normal;transform:scaleX(1.0039);">Analyze</div><div class="t" style="left:1772.78px;top:171.28px;font-size:14.5px;line-height:14.5px;font-weight:400;color:#2c2c2c;font-family:'Liberation Sans';font-style:normal;transform:scaleX(1.0167);">Data</div><svg style="position:absolute;left:1885px;top:202px" width="13" height="7" viewBox="0 0 13 7"><path d="M0.6 0.6L6.5 6.3L12.4 0.6" fill="none" stroke="#242424" stroke-width="1.3"/></svg><div style="position:absolute;left:10px;top:232px;width:133px;height:30px;background:#fff;border:1px solid #D5D2CE;border-radius:5px;box-sizing:border-box;"></div><div class="t" style="left:16.33px;top:239.32px;font-size:15.5px;line-height:15.5px;font-weight:400;color:#2c2c2c;font-family:'Liberation Sans';font-style:normal;transform:scaleX(1.0737);">G9</div><svg style="position:absolute;left:123px;top:246px" width="13" height="7" viewBox="0 0 13 7"><path d="M0.6 0.6L6.5 6.2L12.4 0.6" fill="none" stroke="#242424" stroke-width="1.3"/></svg><div style="position:absolute;left:154px;top:241px;width:3px;height:3px;background:#333;"></div><div style="position:absolute;left:154px;top:246px;width:3px;height:3px;background:#333;"></div><div style="position:absolute;left:154px;top:251px;width:3px;height:3px;background:#333;"></div><div style="position:absolute;left:168px;top:232px;width:92px;height:30px;background:#fff;border:1px solid #D5D2CE;border-radius:5px;box-sizing:border-box;"></div><svg style="position:absolute;left:176px;top:239px" width="16" height="16" viewBox="0 0 16 16"><path d="M0.7 0.7L15.3 15.3M15.3 0.7L0.7 15.3" stroke="#A8A8A8" stroke-width="1.2"/></svg><svg style="position:absolute;left:203px;top:239px" width="21" height="15" viewBox="0 0 21 15"><path d="M0.6 8L6.8 14L20.4 0.6" fill="none" stroke="#A8A8A8" stroke-width="1.2"/></svg><svg style="position:absolute;left:234px;top:236px" width="20" height="22" viewBox="0 0 20 22"><path d="M14.8 2.8C14 1.2 11.8 1 10.8 3.2C10.2 4.4 9.2 8.5 8 12.5C7 16 6.2 19.2 4.4 20.2C3.2 20.8 2 20.6 1.6 20" fill="none" stroke="#2a2a2a" stroke-width="1.4"/><circle cx="14.5" cy="3" r="1.15" fill="#2a2a2a"/><circle cx="2" cy="19.6" r="1.1" fill="#2a2a2a"/><path d="M5.6 7.3H11.8" stroke="#2a2a2a" stroke-width="1.1"/><path d="M10.2 10.4C11.4 9 12.6 9.6 13.2 11.4L14.6 15.4C15.2 17 16.6 16.8 18 15" fill="none" stroke="#2a2a2a" stroke-width="1.25"/><path d="M18.8 9.8C17.8 9.2 16.8 10 15.8 11.2L12.8 14.8C11.8 16 11 16.8 10.2 16.4" fill="none" stroke="#2a2a2a" stroke-width="1.25"/></svg><div style="position:absolute;left:265px;top:232px;width:1645px;height:54px;background:#fff;border:1px solid #D5D2CE;border-radius:5px;box-sizing:border-box;"></div><svg style="position:absolute;left:1892px;top:242px" width="13" height="7" viewBox="0 0 13 7"><path d="M0.6 6.4L6.5 0.8L12.4 6.4" fill="none" stroke="#242424" stroke-width="1.3"/></svg><div style="position:absolute;left:0px;top:294px;width:1894px;height:24px;background:#F0F0F0;"></div><div style="position:absolute;left:0px;top:318px;width:33px;height:635px;background:#F0F0F0;"></div><div style="position:absolute;left:34px;top:318px;width:1860px;height:635px;background:#fff;"></div><svg style="position:absolute;left:0;top:0" width="1919" height="1018"><defs><linearGradient id="rg" gradientUnits="userSpaceOnUse" x1="0" x2="33" y1="0" y2="0"><stop offset="0" stop-color="#F0F0F0"/><stop offset="0.5" stop-color="#CFCFCF"/><stop offset="1" stop-color="#C8C8C8"/></linearGradient></defs><path d="M113.5 318V953" stroke="#E1E1E1" stroke-width="1"/><path d="M193.5 318V953" stroke="#E1E1E1" stroke-width="1"/><path d="M273.5 318V953" stroke="#E1E1E1" stroke-width="1"/><path d="M353.5 318V953" stroke="#E1E1E1" stroke-width="1"/><path d="M433.5 318V953" stroke="#E1E1E1" stroke-width="1"/><path d="M513.5 318V953" stroke="#E1E1E1" stroke-width="1"/><path d="M593.5 318V953" stroke="#E1E1E1" stroke-width="1"/><path d="M673.5 318V953" stroke="#E1E1E1" stroke-width="1"/><path d="M753.5 318V953" stroke="#E1E1E1" stroke-width="1"/><path d="M833.5 318V953" stroke="#E1E1E1" stroke-width="1"/><path d="M913.5 318V953" stroke="#E1E1E1" stroke-width="1"/><path d="M993.5 318V953" stroke="#E1E1E1" stroke-width="1"/><path d="M1073.5 318V953" stroke="#E1E1E1" stroke-width="1"/><path d="M1153.5 318V953" stroke="#E1E1E1" stroke-width="1"/><path d="M1233.5 318V953" stroke="#E1E1E1" stroke-width="1"/><path d="M1313.5 318V953" stroke="#E1E1E1" stroke-width="1"/><path d="M1393.5 318V953" stroke="#E1E1E1" stroke-width="1"/><path d="M1473.5 318V953" stroke="#E1E1E1" stroke-width="1"/><path d="M1553.5 318V953" stroke="#E1E1E1" stroke-width="1"/><path d="M1633.5 318V953" stroke="#E1E1E1" stroke-width="1"/><path d="M1713.5 318V953" stroke="#E1E1E1" stroke-width="1"/><path d="M1793.5 318V953" stroke="#E1E1E1" stroke-width="1"/><path d="M1873.5 318V953" stroke="#E1E1E1" stroke-width="1"/><path d="M34 341.5H1894" stroke="#E1E1E1" stroke-width="1"/><path d="M34 365.5H1894" stroke="#E1E1E1" stroke-width="1"/><path d="M34 389.5H1894" stroke="#E1E1E1" stroke-width="1"/><path d="M34 413.5H1894" stroke="#E1E1E1" stroke-width="1"/><path d="M34 437.5H1894" stroke="#E1E1E1" stroke-width="1"/><path d="M34 461.5H1894" stroke="#E1E1E1" stroke-width="1"/><path d="M34 485.5H1894" stroke="#E1E1E1" stroke-width="1"/><path d="M34 509.5H1894" stroke="#E1E1E1" stroke-width="1"/><path d="M34 533.5H1894" stroke="#E1E1E1" stroke-width="1"/><path d="M34 557.5H1894" stroke="#E1E1E1" stroke-width="1"/><path d="M34 581.5H1894" stroke="#E1E1E1" stroke-width="1"/><path d="M34 605.5H1894" stroke="#E1E1E1" stroke-width="1"/><path d="M34 629.5H1894" stroke="#E1E1E1" stroke-width="1"/><path d="M34 653.5H1894" stroke="#E1E1E1" stroke-width="1"/><path d="M34 677.5H1894" stroke="#E1E1E1" stroke-width="1"/><path d="M34 701.5H1894" stroke="#E1E1E1" stroke-width="1"/><path d="M34 725.5H1894" stroke="#E1E1E1" stroke-width="1"/><path d="M34 749.5H1894" stroke="#E1E1E1" stroke-width="1"/><path d="M34 773.5H1894" stroke="#E1E1E1" stroke-width="1"/><path d="M34 797.5H1894" stroke="#E1E1E1" stroke-width="1"/><path d="M34 821.5H1894" stroke="#E1E1E1" stroke-width="1"/><path d="M34 845.5H1894" stroke="#E1E1E1" stroke-width="1"/><path d="M34 869.5H1894" stroke="#E1E1E1" stroke-width="1"/><path d="M34 893.5H1894" stroke="#E1E1E1" stroke-width="1"/><path d="M34 917.5H1894" stroke="#E1E1E1" stroke-width="1"/><path d="M34 941.5H1894" stroke="#E1E1E1" stroke-width="1"/><path d="M33.5 294V317" stroke="#D6D6D6" stroke-width="1"/><path d="M113.5 294V317" stroke="#D6D6D6" stroke-width="1"/><path d="M193.5 294V317" stroke="#D6D6D6" stroke-width="1"/><path d="M273.5 294V317" stroke="#D6D6D6" stroke-width="1"/><path d="M353.5 294V317" stroke="#D6D6D6" stroke-width="1"/><path d="M433.5 294V317" stroke="#D6D6D6" stroke-width="1"/><path d="M513.5 294V317" stroke="#D6D6D6" stroke-width="1"/><path d="M593.5 294V317" stroke="#D6D6D6" stroke-width="1"/><path d="M673.5 294V317" stroke="#D6D6D6" stroke-width="1"/><path d="M753.5 294V317" stroke="#D6D6D6" stroke-width="1"/><path d="M833.5 294V317" stroke="#D6D6D6" stroke-width="1"/><path d="M913.5 294V317" stroke="#D6D6D6" stroke-width="1"/><path d="M993.5 294V317" stroke="#D6D6D6" stroke-width="1"/><path d="M1073.5 294V317" stroke="#D6D6D6" stroke-width="1"/><path d="M1153.5 294V317" stroke="#D6D6D6" stroke-width="1"/><path d="M1233.5 294V317" stroke="#D6D6D6" stroke-width="1"/><path d="M1313.5 294V317" stroke="#D6D6D6" stroke-width="1"/><path d="M1393.5 294V317" stroke="#D6D6D6" stroke-width="1"/><path d="M1473.5 294V317" stroke="#D6D6D6" stroke-width="1"/><path d="M1553.5 294V317" stroke="#D6D6D6" stroke-width="1"/><path d="M1633.5 294V317" stroke="#D6D6D6" stroke-width="1"/><path d="M1713.5 294V317" stroke="#D6D6D6" stroke-width="1"/><path d="M1793.5 294V317" stroke="#D6D6D6" stroke-width="1"/><path d="M1873.5 294V317" stroke="#D6D6D6" stroke-width="1"/><path d="M2 341.5H33" stroke="url(#rg)" stroke-width="1"/><path d="M2 365.5H33" stroke="url(#rg)" stroke-width="1"/><path d="M2 389.5H33" stroke="url(#rg)" stroke-width="1"/><path d="M2 413.5H33" stroke="url(#rg)" stroke-width="1"/><path d="M2 437.5H33" stroke="url(#rg)" stroke-width="1"/><path d="M2 461.5H33" stroke="url(#rg)" stroke-width="1"/><path d="M2 485.5H33" stroke="url(#rg)" stroke-width="1"/><path d="M2 509.5H33" stroke="url(#rg)" stroke-width="1"/><path d="M2 533.5H33" stroke="url(#rg)" stroke-width="1"/><path d="M2 557.5H33" stroke="url(#rg)" stroke-width="1"/><path d="M2 581.5H33" stroke="url(#rg)" stroke-width="1"/><path d="M2 605.5H33" stroke="url(#rg)" stroke-width="1"/><path d="M2 629.5H33" stroke="url(#rg)" stroke-width="1"/><path d="M2 653.5H33" stroke="url(#rg)" stroke-width="1"/><path d="M2 677.5H33" stroke="url(#rg)" stroke-width="1"/><path d="M2 701.5H33" stroke="url(#rg)" stroke-width="1"/><path d="M2 725.5H33" stroke="url(#rg)" stroke-width="1"/><path d="M2 749.5H33" stroke="url(#rg)" stroke-width="1"/><path d="M2 773.5H33" stroke="url(#rg)" stroke-width="1"/><path d="M2 797.5H33" stroke="url(#rg)" stroke-width="1"/><path d="M2 821.5H33" stroke="url(#rg)" stroke-width="1"/><path d="M2 845.5H33" stroke="url(#rg)" stroke-width="1"/><path d="M2 869.5H33" stroke="url(#rg)" stroke-width="1"/><path d="M2 893.5H33" stroke="url(#rg)" stroke-width="1"/><path d="M2 917.5H33" stroke="url(#rg)" stroke-width="1"/><path d="M2 941.5H33" stroke="url(#rg)" stroke-width="1"/></svg><div style="position:absolute;left:33px;top:317px;width:1861px;height:1px;background:#B9B9B9;"></div><div style="position:absolute;left:33px;top:317px;width:1px;height:636px;background:#B9B9B9;"></div><div style="position:absolute;left:0px;top:317px;width:33px;height:1px;background:linear-gradient(90deg,#F0F0F0,#C4C4C4);"></div><svg style="position:absolute;left:14px;top:298px" width="16" height="16" viewBox="0 0 16 16"><path d="M16 0V16H0Z" fill="#DCDCDC"/></svg><div style="position:absolute;left:514px;top:294px;width:79px;height:23px;background:#E1E1E1;"></div><div style="position:absolute;left:513px;top:294px;width:1px;height:23px;background:#C6C6C6;"></div><div style="position:absolute;left:593px;top:294px;width:1px;height:23px;background:#C6C6C6;"></div><div style="position:absolute;left:513px;top:316px;width:81px;height:2px;background:#107C41;"></div><div style="position:absolute;left:0px;top:510px;width:32px;height:23px;background:#E1E1E1;"></div><div style="position:absolute;left:0px;top:509px;width:33px;height:1px;background:linear-gradient(90deg,#E8E8E8,#BDBDBD);"></div><div style="position:absolute;left:0px;top:533px;width:33px;height:1px;background:linear-gradient(90deg,#E8E8E8,#BDBDBD);"></div><div style="position:absolute;left:32px;top:509px;width:2px;height:25px;background:#107C41;"></div><div class="t" style="left:68.50px;top:298.57px;font-size:15.8px;line-height:15.8px;font-weight:400;color:#333;font-family:'Liberation Sans';font-style:normal;">A</div><div class="t" style="left:148.50px;top:298.57px;font-size:15.8px;line-height:15.8px;font-weight:400;color:#333;font-family:'Liberation Sans';font-style:normal;">B</div><div class="t" style="left:228.00px;top:298.57px;font-size:15.8px;line-height:15.8px;font-weight:400;color:#333;font-family:'Liberation Sans';font-style:normal;">C</div><div class="t" style="left:308.00px;top:298.57px;font-size:15.8px;line-height:15.8px;font-weight:400;color:#333;font-family:'Liberation Sans';font-style:normal;">D</div><div class="t" style="left:388.50px;top:298.57px;font-size:15.8px;line-height:15.8px;font-weight:400;color:#333;font-family:'Liberation Sans';font-style:normal;">E</div><div class="t" style="left:469.00px;top:298.57px;font-size:15.8px;line-height:15.8px;font-weight:400;color:#333;font-family:'Liberation Sans';font-style:normal;">F</div><div class="t" style="left:548.00px;top:298.57px;font-size:15.8px;line-height:15.8px;font-weight:400;color:#0E6B38;font-family:'Liberation Sans';font-style:normal;">G</div><div class="t" style="left:628.50px;top:298.57px;font-size:15.8px;line-height:15.8px;font-weight:400;color:#333;font-family:'Liberation Sans';font-style:normal;">H</div><div class="t" style="left:712.00px;top:298.57px;font-size:15.8px;line-height:15.8px;font-weight:400;color:#333;font-family:'Liberation Sans';font-style:normal;">I</div><div class="t" style="left:790.50px;top:298.57px;font-size:15.8px;line-height:15.8px;font-weight:400;color:#333;font-family:'Liberation Sans';font-style:normal;">J</div><div class="t" style="left:868.50px;top:298.57px;font-size:15.8px;line-height:15.8px;font-weight:400;color:#333;font-family:'Liberation Sans';font-style:normal;">K</div><div class="t" style="left:949.50px;top:298.57px;font-size:15.8px;line-height:15.8px;font-weight:400;color:#333;font-family:'Liberation Sans';font-style:normal;">L</div><div class="t" style="left:1027.50px;top:298.57px;font-size:15.8px;line-height:15.8px;font-weight:400;color:#333;font-family:'Liberation Sans';font-style:normal;">M</div><div class="t" style="left:1108.50px;top:298.57px;font-size:15.8px;line-height:15.8px;font-weight:400;color:#333;font-family:'Liberation Sans';font-style:normal;">N</div><div class="t" style="left:1187.50px;top:298.57px;font-size:15.8px;line-height:15.8px;font-weight:400;color:#333;font-family:'Liberation Sans';font-style:normal;">O</div><div class="t" style="left:1268.50px;top:298.57px;font-size:15.8px;line-height:15.8px;font-weight:400;color:#333;font-family:'Liberation Sans';font-style:normal;">P</div><div class="t" style="left:1347.50px;top:298.57px;font-size:15.8px;line-height:15.8px;font-weight:400;color:#333;font-family:'Liberation Sans';font-style:normal;">Q</div><div class="t" style="left:1428.00px;top:298.57px;font-size:15.8px;line-height:15.8px;font-weight:400;color:#333;font-family:'Liberation Sans';font-style:normal;">R</div><div class="t" style="left:1508.50px;top:298.57px;font-size:15.8px;line-height:15.8px;font-weight:400;color:#333;font-family:'Liberation Sans';font-style:normal;">S</div><div class="t" style="left:1589.00px;top:298.57px;font-size:15.8px;line-height:15.8px;font-weight:400;color:#333;font-family:'Liberation Sans';font-style:normal;">T</div><div class="t" style="left:1668.50px;top:298.57px;font-size:15.8px;line-height:15.8px;font-weight:400;color:#333;font-family:'Liberation Sans';font-style:normal;">U</div><div class="t" style="left:1748.50px;top:298.57px;font-size:15.8px;line-height:15.8px;font-weight:400;color:#333;font-family:'Liberation Sans';font-style:normal;">V</div><div class="t" style="left:1826.50px;top:298.57px;font-size:15.8px;line-height:15.8px;font-weight:400;color:#333;font-family:'Liberation Sans';font-style:normal;">W</div><div class="t" style="left:12.50px;top:322.62px;font-size:15.5px;line-height:15.5px;font-weight:400;color:#333;font-family:'Liberation Sans';font-style:normal;">1</div><div class="t" style="left:12.50px;top:346.62px;font-size:15.5px;line-height:15.5px;font-weight:400;color:#333;font-family:'Liberation Sans';font-style:normal;">2</div><div class="t" style="left:12.50px;top:370.62px;font-size:15.5px;line-height:15.5px;font-weight:400;color:#333;font-family:'Liberation Sans';font-style:normal;">3</div><div class="t" style="left:13.00px;top:394.62px;font-size:15.5px;line-height:15.5px;font-weight:400;color:#333;font-family:'Liberation Sans';font-style:normal;">4</div><div class="t" style="left:12.50px;top:418.62px;font-size:15.5px;line-height:15.5px;font-weight:400;color:#333;font-family:'Liberation Sans';font-style:normal;">5</div><div class="t" style="left:12.50px;top:442.62px;font-size:15.5px;line-height:15.5px;font-weight:400;color:#333;font-family:'Liberation Sans';font-style:normal;">6</div><div class="t" style="left:12.50px;top:466.62px;font-size:15.5px;line-height:15.5px;font-weight:400;color:#333;font-family:'Liberation Sans';font-style:normal;">7</div><div class="t" style="left:12.50px;top:490.62px;font-size:15.5px;line-height:15.5px;font-weight:400;color:#333;font-family:'Liberation Sans';font-style:normal;">8</div><div class="t" style="left:12.50px;top:514.62px;font-size:15.5px;line-height:15.5px;font-weight:400;color:#0E6B38;font-family:'Liberation Sans';font-style:normal;">9</div><div class="t" style="left:8.00px;top:538.62px;font-size:15.5px;line-height:15.5px;font-weight:400;color:#333;font-family:'Liberation Sans';font-style:normal;">10</div><div class="t" style="left:8.50px;top:562.62px;font-size:15.5px;line-height:15.5px;font-weight:400;color:#333;font-family:'Liberation Sans';font-style:normal;">11</div><div class="t" style="left:8.00px;top:586.62px;font-size:15.5px;line-height:15.5px;font-weight:400;color:#333;font-family:'Liberation Sans';font-style:normal;">12</div><div class="t" style="left:8.00px;top:610.62px;font-size:15.5px;line-height:15.5px;font-weight:400;color:#333;font-family:'Liberation Sans';font-style:normal;">13</div><div class="t" style="left:8.00px;top:634.62px;font-size:15.5px;line-height:15.5px;font-weight:400;color:#333;font-family:'Liberation Sans';font-style:normal;">14</div><div class="t" style="left:8.00px;top:658.62px;font-size:15.5px;line-height:15.5px;font-weight:400;color:#333;font-family:'Liberation Sans';font-style:normal;">15</div><div class="t" style="left:8.00px;top:682.62px;font-size:15.5px;line-height:15.5px;font-weight:400;color:#333;font-family:'Liberation Sans';font-style:normal;">16</div><div class="t" style="left:8.00px;top:706.62px;font-size:15.5px;line-height:15.5px;font-weight:400;color:#333;font-family:'Liberation Sans';font-style:normal;">17</div><div class="t" style="left:8.00px;top:730.62px;font-size:15.5px;line-height:15.5px;font-weight:400;color:#333;font-family:'Liberation Sans';font-style:normal;">18</div><div class="t" style="left:8.00px;top:754.62px;font-size:15.5px;line-height:15.5px;font-weight:400;color:#333;font-family:'Liberation Sans';font-style:normal;">19</div><div class="t" style="left:8.00px;top:778.62px;font-size:15.5px;line-height:15.5px;font-weight:400;color:#333;font-family:'Liberation Sans';font-style:normal;">20</div><div class="t" style="left:8.00px;top:802.62px;font-size:15.5px;line-height:15.5px;font-weight:400;color:#333;font-family:'Liberation Sans';font-style:normal;">21</div><div class="t" style="left:8.00px;top:826.62px;font-size:15.5px;line-height:15.5px;font-weight:400;color:#333;font-family:'Liberation Sans';font-style:normal;">22</div><div class="t" style="left:8.00px;top:850.62px;font-size:15.5px;line-height:15.5px;font-weight:400;color:#333;font-family:'Liberation Sans';font-style:normal;">23</div><div class="t" style="left:8.00px;top:874.62px;font-size:15.5px;line-height:15.5px;font-weight:400;color:#333;font-family:'Liberation Sans';font-style:normal;">24</div><div class="t" style="left:8.00px;top:898.62px;font-size:15.5px;line-height:15.5px;font-weight:400;color:#333;font-family:'Liberation Sans';font-style:normal;">25</div><div class="t" style="left:8.00px;top:922.62px;font-size:15.5px;line-height:15.5px;font-weight:400;color:#333;font-family:'Liberation Sans';font-style:normal;">26</div><div class="t" style="left:8.00px;top:946.62px;font-size:15.5px;line-height:15.5px;font-weight:400;color:#333;font-family:'Liberation Sans';font-style:normal;">27</div><div style="position:absolute;left:512px;top:508px;width:83px;height:27px;border:2px solid #107C41;box-sizing:border-box;"></div><div style="position:absolute;left:590px;top:529px;width:8px;height:8px;background:#fff;"></div><div style="position:absolute;left:591px;top:530.5px;width:5.5px;height:5.5px;background:#107C41;"></div><div style="position:absolute;left:134px;top:953px;width:86px;height:8px;background:#fff;"></div><div style="position:absolute;left:0px;top:953px;width:141px;height:40px;background:#F1ECE6;border-top-right-radius:6px;"></div><div style="position:absolute;left:213px;top:953px;width:1706px;height:40px;background:#F1ECE6;border-top-left-radius:6px;"></div><div style="position:absolute;left:141px;top:953px;width:72px;height:35px;background:#fff;border-bottom-left-radius:7px;border-bottom-right-radius:7px;box-shadow:0 1px 1.5px -0.3px rgba(0,0,0,0.22);"></div><svg style="position:absolute;left:32px;top:966px" width="8" height="12" viewBox="0 0 8 12"><path d="M7.4 0.6L1.2 6L7.4 11.4" fill="none" stroke="#8A8A8A" stroke-width="1.2"/></svg><svg style="position:absolute;left:72px;top:966px" width="8" height="12" viewBox="0 0 8 12"><path d="M0.6 0.6L6.8 6L0.6 11.4" fill="none" stroke="#8A8A8A" stroke-width="1.2"/></svg><div class="t" style="left:150.72px;top:960.17px;font-size:18.5px;line-height:18.5px;font-weight:400;color:#1f1f1f;font-family:'Liberation Sans';font-style:normal;transform:scaleX(0.8825);-webkit-text-stroke:0.45px #1f1f1f;">Sheet1</div><div style="position:absolute;left:151px;top:983px;width:52px;height:2.2px;background:#0F7B3F;border-radius:1px;"></div><div style="position:absolute;left:218px;top:961px;width:1px;height:24px;background:#D0CCC8;"></div><svg style="position:absolute;left:271px;top:965px" width="15" height="15" viewBox="0 0 15 15"><path d="M7.5 0.5V14.5M0.5 7.5H14.5" stroke="#242424" stroke-width="1.4"/></svg><div style="position:absolute;left:1897px;top:294px;width:20px;height:661px;background:#F6F6F6;border-radius:10px;"></div><svg style="position:absolute;left:1902px;top:300px" width="11" height="9" viewBox="0 0 11 9"><path d="M5.5 0.5L10.8 8.5H0.2Z" fill="#707070" stroke="#707070" stroke-width="0.6" stroke-linejoin="round"/></svg><div style="position:absolute;left:1902px;top:315px;width:11px;height:606px;background:#707070;border-radius:5.5px;"></div><svg style="position:absolute;left:1902px;top:941px" width="11" height="9" viewBox="0 0 11 9"><path d="M5.5 8.5L10.8 0.5H0.2Z" fill="#707070" stroke="#707070" stroke-width="0.6" stroke-linejoin="round"/></svg><div style="position:absolute;left:1175px;top:962px;width:721px;height:21px;background:#F6F6F6;border-radius:10.5px;"></div><svg style="position:absolute;left:1182px;top:967px" width="9" height="11" viewBox="0 0 9 11"><path d="M0.5 5.5L8.5 0.2V10.8Z" fill="#707070" stroke="#707070" stroke-width="0.6" stroke-linejoin="round"/></svg><div style="position:absolute;left:1197px;top:967px;width:656px;height:11px;background:#707070;border-radius:5.5px;"></div><svg style="position:absolute;left:1882px;top:967px" width="9" height="11" viewBox="0 0 9 11"><path d="M8.5 5.5L0.5 0.2V10.8Z" fill="#707070" stroke="#707070" stroke-width="0.6" stroke-linejoin="round"/></svg><div style="position:absolute;left:1155px;top:967px;width:2.5px;height:2.5px;background:#242424;"></div><div style="position:absolute;left:1155px;top:972.5px;width:2.5px;height:2.5px;background:#242424;"></div><div style="position:absolute;left:1155px;top:978px;width:2.5px;height:2.5px;background:#242424;"></div><div style="position:absolute;left:0px;top:993px;width:1919px;height:25px;background:#F3F3F3;"></div><div class="t" style="left:13.42px;top:1002.03px;font-size:12.9px;line-height:12.9px;font-weight:400;color:#2c2c2c;font-family:'Liberation Sans';font-style:normal;transform:scaleX(0.9806);">Ready</div><svg style="position:absolute;left:75px;top:999px" width="19" height="17" viewBox="0 0 19 17">
<path d="M0.8 15.3V1.2H17.3V6" fill="none" stroke="#333" stroke-width="1.4"/>
<path d="M0.8 3.6H17.3 M0.8 15.3H6" fill="none" stroke="#333" stroke-width="1.3"/>
<rect x="2.6" y="5.6" width="3.8" height="1" fill="#555"/><rect x="2.6" y="8.3" width="1.8" height="1" fill="#333"/><rect x="2.6" y="10.9" width="1.8" height="1" fill="#555"/>
<circle cx="12.1" cy="10.9" r="4.6" fill="#F3F3F3" stroke="#333" stroke-width="1.4"/>
<circle cx="12.1" cy="10.9" r="1.9" fill="#333"/>
</svg><svg style="position:absolute;left:115px;top:998px" width="19" height="18" viewBox="0 0 19 18">
<circle cx="7.5" cy="2.8" r="1.9" fill="none" stroke="#333" stroke-width="1.2"/>
<path d="M4.3 7.6C2.5 6.8 0.6 6.4 0.6 4.8C0.6 3 3 2.8 4.6 4.2C5.6 5 6.5 5.4 7.5 5.4C8.5 5.4 9.4 5 10.4 4.2C12 2.8 14.6 3 14.6 4.8C14.6 6.3 12.8 6.8 10.8 7.5V10.2" fill="none" stroke="#333" stroke-width="1.2" stroke-linejoin="round"/>
<path d="M4.3 7.6C4.6 10.5 3.6 13 2.9 15C2.6 16.5 4.4 17.3 5.3 16" fill="none" stroke="#333" stroke-width="1.2"/>
<path d="M8.4 13L12 16.6L18.3 10.4" fill="none" stroke="#333" stroke-width="1.3"/>
</svg><div class="t" style="left:137.30px;top:1002.03px;font-size:12.9px;line-height:12.9px;font-weight:400;color:#2c2c2c;font-family:'Liberation Sans';font-style:normal;transform:scaleX(1.0220);">Accessibility: Good to go</div><div style="position:absolute;left:1548px;top:994px;width:50px;height:24px;background:#E1E1E1;"></div><svg style="position:absolute;left:1564px;top:998px" width="17" height="17" viewBox="0 0 17 17"><rect x="0.7" y="0.7" width="15.6" height="15.6" rx="1" fill="none" stroke="#424242" stroke-width="1.3"/><path d="M5.9 0.7V16.3M11.1 0.7V16.3M0.7 5.9H16.3M0.7 11.1H16.3" stroke="#424242" stroke-width="1.3"/></svg><svg style="position:absolute;left:1614px;top:998px" width="18" height="17" viewBox="0 0 18 17"><rect x="0.7" y="0.7" width="16.6" height="15.6" rx="1" fill="none" stroke="#424242" stroke-width="1.3"/><rect x="4" y="3.5" width="10" height="10" fill="none" stroke="#424242" stroke-width="1.2"/><path d="M6 6.5H12M6 8.5H12M6 10.5H12" stroke="#424242" stroke-width="1"/></svg><svg style="position:absolute;left:1664px;top:998px" width="18" height="17" viewBox="0 0 18 17"><rect x="0.7" y="0.7" width="16.6" height="15.6" rx="1" fill="none" stroke="#424242" stroke-width="1.3"/><path d="M5.6 0.7V9.6M10.9 0.7V9.6H0.7" fill="none" stroke="#333" stroke-width="1.2"/></svg><div style="position:absolute;left:1705px;top:1006px;width:10px;height:1.2px;background:#424242;"></div><div style="position:absolute;left:1721px;top:1007px;width:125px;height:1px;background:#707070;"></div><div style="position:absolute;left:1781px;top:1000px;width:6px;height:14px;background:#616161;border-radius:1px;"></div><svg style="position:absolute;left:1852px;top:1002px" width="10" height="10" viewBox="0 0 10 10"><path d="M5 0V10M0 5H10" stroke="#424242" stroke-width="1.2"/></svg><div class="t" style="left:1877.75px;top:1001.43px;font-size:12.9px;line-height:12.9px;font-weight:400;color:#2c2c2c;font-family:'Liberation Sans';font-style:normal;transform:scaleX(0.9469);">100%</div>
</body></html>
